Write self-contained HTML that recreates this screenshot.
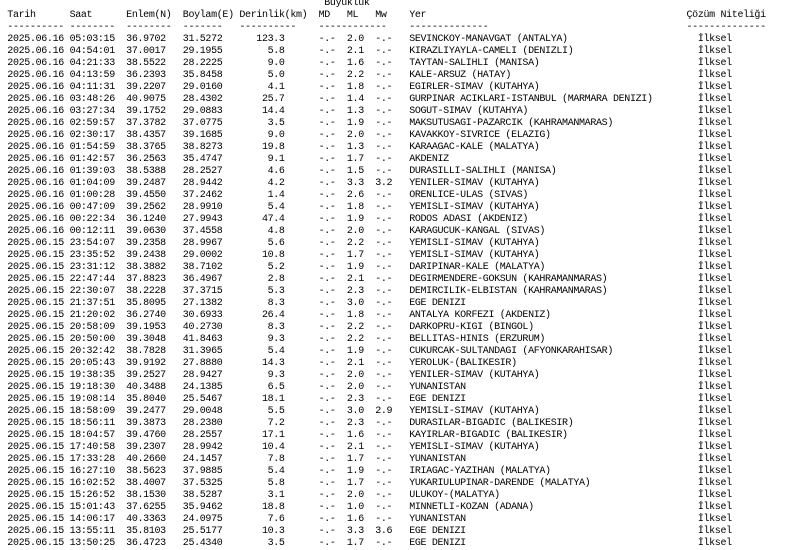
<!DOCTYPE html>
<html><head><meta charset="utf-8"><style>
html,body{margin:0;padding:0;background:#fff;width:800px;height:549px;overflow:hidden}
.c{position:absolute;top:-14px;white-space:pre;font-family:"Liberation Mono","DejaVu Sans Mono",monospace;font-size:10px;letter-spacing:-0.34px;line-height:12px;color:#000;margin:0}
</style></head><body>
<div class="c" style="left:7.3px">

Tarih      Saat      Enlem(N)  Boylam(E) Derinlik(km)
---------- --------  --------  -------   ----------
2025.06.16 05:03:15  36.9702   31.5272
2025.06.16 04:54:01  37.0017   29.1955
2025.06.16 04:21:33  38.5522   28.2225
2025.06.16 04:13:59  36.2393   35.8458
2025.06.16 04:11:31  39.2207   29.0160
2025.06.16 03:48:26  40.9075   28.4302
2025.06.16 03:27:34  39.1752   29.0883
2025.06.16 02:59:57  37.3782   37.0775
2025.06.16 02:30:17  38.4357   39.1685
2025.06.16 01:54:59  38.3765   38.8273
2025.06.16 01:42:57  36.2563   35.4747
2025.06.16 01:39:03  38.5388   28.2527
2025.06.16 01:04:09  39.2487   28.9442
2025.06.16 01:00:28  39.4550   37.2462
2025.06.16 00:47:09  39.2562   28.9910
2025.06.16 00:22:34  36.1240   27.9943
2025.06.16 00:12:11  39.0630   37.4558
2025.06.15 23:54:07  39.2358   28.9967
2025.06.15 23:35:52  39.2438   29.0002
2025.06.15 23:31:12  38.3882   38.7102
2025.06.15 22:47:44  37.8823   36.4967
2025.06.15 22:30:07  38.2228   37.3715
2025.06.15 21:37:51  35.8095   27.1382
2025.06.15 21:20:02  36.2740   30.6933
2025.06.15 20:58:09  39.1953   40.2730
2025.06.15 20:50:00  39.3048   41.8463
2025.06.15 20:32:42  38.7828   31.3965
2025.06.15 20:05:43  39.9192   27.8880
2025.06.15 19:38:35  39.2527   28.9427
2025.06.15 19:18:30  40.3488   24.1385
2025.06.15 19:08:14  35.8040   25.5467
2025.06.15 18:58:09  39.2477   29.0048
2025.06.15 18:56:11  39.3873   28.2380
2025.06.15 18:04:57  39.4760   28.2557
2025.06.15 17:40:58  39.2307   28.9942
2025.06.15 17:33:28  40.2660   24.1457
2025.06.15 16:27:10  38.5623   37.9885
2025.06.15 16:02:52  38.4007   37.5325
2025.06.15 15:26:52  38.1530   38.5287
2025.06.15 15:01:43  37.6255   35.9462
2025.06.15 14:06:17  40.3363   24.0975
2025.06.15 13:55:11  35.8103   25.5177
2025.06.15 13:50:25  36.4723   25.4340</div>
<div class="c" style="left:234.6px;width:50px;text-align:right">


 
123.3
5.8
9.0
5.0
4.1
25.7
14.4
3.5
9.0
19.8
9.1
4.6
4.2
1.4
5.4
47.4
4.8
5.6
10.8
5.2
2.8
5.3
8.3
26.4
8.3
9.3
5.4
14.3
9.3
6.5
18.1
5.5
7.2
17.1
10.4
7.8
5.4
5.8
3.1
18.8
7.6
10.3
3.5</div>
<div class="c" style="left:318.6px">
 Büyüklük
MD   ML   Mw
------------
-.-  2.0  -.-
-.-  2.1  -.-
-.-  1.6  -.-
-.-  2.2  -.-
-.-  1.8  -.-
-.-  1.4  -.-
-.-  1.3  -.-
-.-  1.9  -.-
-.-  2.0  -.-
-.-  1.3  -.-
-.-  1.7  -.-
-.-  1.5  -.-
-.-  3.3  3.2
-.-  2.6  -.-
-.-  1.8  -.-
-.-  1.9  -.-
-.-  2.0  -.-
-.-  2.2  -.-
-.-  1.7  -.-
-.-  1.9  -.-
-.-  2.1  -.-
-.-  2.3  -.-
-.-  3.0  -.-
-.-  1.8  -.-
-.-  2.2  -.-
-.-  2.2  -.-
-.-  1.9  -.-
-.-  2.1  -.-
-.-  2.0  -.-
-.-  2.0  -.-
-.-  2.3  -.-
-.-  3.0  2.9
-.-  2.3  -.-
-.-  1.6  -.-
-.-  2.1  -.-
-.-  1.7  -.-
-.-  1.9  -.-
-.-  1.7  -.-
-.-  2.0  -.-
-.-  1.0  -.-
-.-  1.6  -.-
-.-  3.3  3.6
-.-  1.7  -.-</div>
<div class="c" style="left:409.2px">

Yer
--------------
SEVINCKOY-MANAVGAT (ANTALYA)
KIRAZLIYAYLA-CAMELI (DENIZLI)
TAYTAN-SALIHLI (MANISA)
KALE-ARSUZ (HATAY)
EGIRLER-SIMAV (KUTAHYA)
GURPINAR ACIKLARI-ISTANBUL (MARMARA DENIZI)
SOGUT-SIMAV (KUTAHYA)
MAKSUTUSAGI-PAZARCIK (KAHRAMANMARAS)
KAVAKKOY-SIVRICE (ELAZIG)
KARAAGAC-KALE (MALATYA)
AKDENIZ
DURASILLI-SALIHLI (MANISA)
YENILER-SIMAV (KUTAHYA)
ORENLICE-ULAS (SIVAS)
YEMISLI-SIMAV (KUTAHYA)
RODOS ADASI (AKDENIZ)
KARAGUCUK-KANGAL (SIVAS)
YEMISLI-SIMAV (KUTAHYA)
YEMISLI-SIMAV (KUTAHYA)
DARIPINAR-KALE (MALATYA)
DEGIRMENDERE-GOKSUN (KAHRAMANMARAS)
DEMIRCILIK-ELBISTAN (KAHRAMANMARAS)
EGE DENIZI
ANTALYA KORFEZI (AKDENIZ)
DARKOPRU-KIGI (BINGOL)
BELLITAS-HINIS (ERZURUM)
CUKURCAK-SULTANDAGI (AFYONKARAHISAR)
YEROLUK-(BALIKESIR)
YENILER-SIMAV (KUTAHYA)
YUNANISTAN
EGE DENIZI
YEMISLI-SIMAV (KUTAHYA)
DURASILAR-BIGADIC (BALIKESIR)
KAYIRLAR-BIGADIC (BALIKESIR)
YEMISLI-SIMAV (KUTAHYA)
YUNANISTAN
IRIAGAC-YAZIHAN (MALATYA)
YUKARIULUPINAR-DARENDE (MALATYA)
ULUKOY-(MALATYA)
MINNETLI-KOZAN (ADANA)
YUNANISTAN
EGE DENIZI
EGE DENIZI</div>
<div class="c" style="left:686.5px">

Çözüm Niteliği
--------------
  İlksel
  İlksel
  İlksel
  İlksel
  İlksel
  İlksel
  İlksel
  İlksel
  İlksel
  İlksel
  İlksel
  İlksel
  İlksel
  İlksel
  İlksel
  İlksel
  İlksel
  İlksel
  İlksel
  İlksel
  İlksel
  İlksel
  İlksel
  İlksel
  İlksel
  İlksel
  İlksel
  İlksel
  İlksel
  İlksel
  İlksel
  İlksel
  İlksel
  İlksel
  İlksel
  İlksel
  İlksel
  İlksel
  İlksel
  İlksel
  İlksel
  İlksel
  İlksel</div>
</body></html>
